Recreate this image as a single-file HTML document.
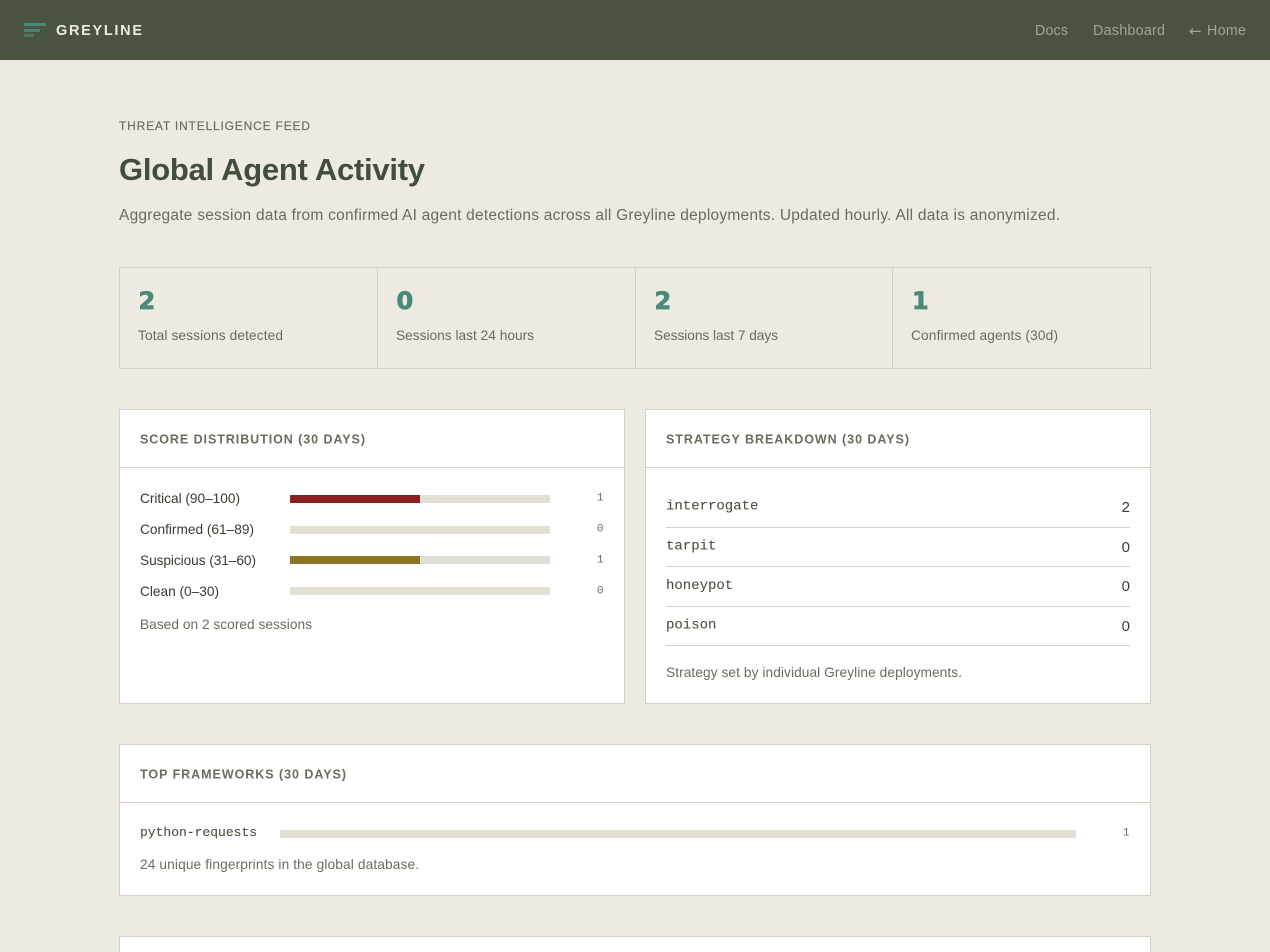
<!DOCTYPE html>
<html lang="en">
<head>
<meta charset="utf-8">
<title>Global Agent Activity - Greyline</title>
<style>
html,body{margin:0;padding:0;background:#eceae3;overflow:hidden;height:952px;}
body{position:relative;width:1270px;height:952px;overflow:hidden;font-family:"Liberation Sans",sans-serif;}
.b{position:absolute;box-sizing:border-box;}
.card{background:#fff;border:1px solid #d4d0c6;}
svg{position:absolute;left:0;top:0;}
text{font-family:"Liberation Sans",sans-serif;}
.lab{font-size:13.7px;fill:#6b6b5e;}
.nav{font-size:14.3px;fill:#a1a694;}
.hd{font-size:12.5px;font-weight:700;fill:#6b6b5e;}
.row{font-size:13.7px;fill:#3a3c33;}
.cnt{font-family:"Liberation Mono",monospace;font-size:11px;fill:#6b6b5e;text-anchor:end;}
.st{font-family:"Liberation Mono",monospace;font-size:14px;fill:#4a5240;stroke:#4a5240;stroke-width:.1px;}
.val{font-size:15px;fill:#3a3c33;text-anchor:end;}
.num{font-family:"DejaVu Sans",sans-serif;font-size:24px;font-weight:700;fill:#4a8a78;stroke:#4a8a78;stroke-width:.8px;}
</style>
</head>
<body>
<div class="b" style="left:0;top:0;width:1270px;height:60px;background:#4a5240"></div>
<div class="b" style="left:24px;top:23px;width:22px;height:3px;background:#4a8a78"></div>
<div class="b" style="left:24px;top:29px;width:16px;height:3px;background:#4a8a78;opacity:.9"></div>
<div class="b" style="left:24px;top:34px;width:10px;height:3px;background:#4a8a78;opacity:.7"></div>

<div class="b" style="left:119px;top:267px;width:1032px;height:102px;border:1px solid #d4d0c6"></div>
<div class="b" style="left:377px;top:267px;width:1px;height:102px;background:#d4d0c6"></div>
<div class="b" style="left:635px;top:267px;width:1px;height:102px;background:#d4d0c6"></div>
<div class="b" style="left:892px;top:267px;width:1px;height:102px;background:#d4d0c6"></div>

<div class="b card" style="left:119px;top:409px;width:506px;height:295px"></div>
<div class="b" style="left:120px;top:467px;width:504px;height:1px;background:#d4d0c6"></div>
<div class="b card" style="left:645px;top:409px;width:506px;height:295px"></div>
<div class="b" style="left:646px;top:467px;width:504px;height:1px;background:#d4d0c6"></div>
<div class="b card" style="left:119px;top:744px;width:1032px;height:152px"></div>
<div class="b" style="left:120px;top:802px;width:1030px;height:1px;background:#d4d0c6"></div>
<div class="b card" style="left:119px;top:936px;width:1032px;height:16px;border-bottom:0"></div>

<div class="b" style="left:290px;top:495px;width:260px;height:8px;background:#e2dfd4"></div>
<div class="b" style="left:290px;top:495px;width:130px;height:8px;background:#8b2020"></div>
<div class="b" style="left:290px;top:526px;width:260px;height:8px;background:#e2dfd4"></div>
<div class="b" style="left:290px;top:556px;width:260px;height:8px;background:#e2dfd4"></div>
<div class="b" style="left:290px;top:556px;width:130px;height:8px;background:#8b7520"></div>
<div class="b" style="left:290px;top:587px;width:260px;height:8px;background:#e2dfd4"></div>
<div class="b" style="left:280px;top:830px;width:796px;height:8px;background:#e2dfd4"></div>

<div class="b" style="left:666px;top:527px;width:464px;height:1px;background:#d4d0c6"></div>
<div class="b" style="left:666px;top:566px;width:464px;height:1px;background:#d4d0c6"></div>
<div class="b" style="left:666px;top:606px;width:464px;height:1px;background:#d4d0c6"></div>
<div class="b" style="left:666px;top:645px;width:464px;height:1px;background:#d4d0c6"></div>

<svg width="1270" height="952" viewBox="0 0 1270 952">
<text x="56" y="35" font-size="14.5" font-weight="700" fill="#eceae3" textLength="86" lengthAdjust="spacing">GREYLINE</text>
<text class="nav" x="1035" y="35" textLength="33" lengthAdjust="spacing">Docs</text>
<text class="nav" x="1093" y="35" textLength="72" lengthAdjust="spacing">Dashboard</text>
<text x="1189" y="36" font-size="15" fill="#a1a694" style="font-family:'DejaVu Sans',sans-serif">←</text>
<text class="nav" x="1207" y="35" textLength="39" lengthAdjust="spacing">Home</text>

<text x="119" y="130" font-size="12" fill="#6b6b5e" stroke="#6b6b5e" stroke-width=".15" textLength="191" lengthAdjust="spacing">THREAT INTELLIGENCE FEED</text>
<text x="119" y="180" font-size="31" font-weight="700" fill="#434d3c" textLength="306" lengthAdjust="spacing">Global Agent Activity</text>
<text x="119" y="220" font-size="15.5" fill="#6b6b5e" textLength="941" lengthAdjust="spacing">Aggregate session data from confirmed AI agent detections across all Greyline deployments. Updated hourly. All data is anonymized.</text>

<text class="num" x="138.5" y="309">2</text>
<text class="num" x="396.5" y="309">0</text>
<text class="num" x="654.5" y="309">2</text>
<text class="num" x="912" y="309">1</text>
<text class="lab" x="138" y="340" textLength="145" lengthAdjust="spacing">Total sessions detected</text>
<text class="lab" x="396" y="340" textLength="138" lengthAdjust="spacing">Sessions last 24 hours</text>
<text class="lab" x="654" y="340" textLength="124" lengthAdjust="spacing">Sessions last 7 days</text>
<text class="lab" x="911" y="340" textLength="147" lengthAdjust="spacing">Confirmed agents (30d)</text>

<text class="hd" x="140" y="443.5" textLength="225" lengthAdjust="spacing">SCORE DISTRIBUTION (30 DAYS)</text>
<text class="hd" x="666" y="443.5" textLength="243" lengthAdjust="spacing">STRATEGY BREAKDOWN (30 DAYS)</text>
<text class="hd" x="140" y="778.5" textLength="206" lengthAdjust="spacing">TOP FRAMEWORKS (30 DAYS)</text>

<text class="row" x="140" y="503" textLength="100" lengthAdjust="spacing">Critical (90–100)</text>
<text class="row" x="140" y="534" textLength="114" lengthAdjust="spacing">Confirmed (61–89)</text>
<text class="row" x="140" y="565" textLength="116" lengthAdjust="spacing">Suspicious (31–60)</text>
<text class="row" x="140" y="596" textLength="79" lengthAdjust="spacing">Clean (0–30)</text>
<text class="cnt" x="603.5" y="500.5">1</text>
<text class="cnt" x="603.5" y="531.5">0</text>
<text class="cnt" x="603.5" y="562.5">1</text>
<text class="cnt" x="603.5" y="593.5">0</text>
<text class="lab" x="140" y="629" textLength="172" lengthAdjust="spacing">Based on 2 scored sessions</text>

<text class="st" x="666" y="509.5">interrogate</text>
<text class="st" x="666" y="549.5">tarpit</text>
<text class="st" x="666" y="589">honeypot</text>
<text class="st" x="666" y="628.5">poison</text>
<text class="val" x="1130" y="512">2</text>
<text class="val" x="1130" y="552">0</text>
<text class="val" x="1130" y="591">0</text>
<text class="val" x="1130" y="631">0</text>
<text class="lab" x="666" y="677" textLength="296" lengthAdjust="spacing">Strategy set by individual Greyline deployments.</text>

<text x="140" y="836" font-size="13" fill="#4a5240" stroke="#4a5240" stroke-width=".1" style="font-family:'Liberation Mono',monospace">python-requests</text>
<text class="cnt" x="1129.5" y="835.5">1</text>
<text class="lab" x="140" y="869" textLength="279" lengthAdjust="spacing">24 unique fingerprints in the global database.</text>
</svg>
</body>
</html>
